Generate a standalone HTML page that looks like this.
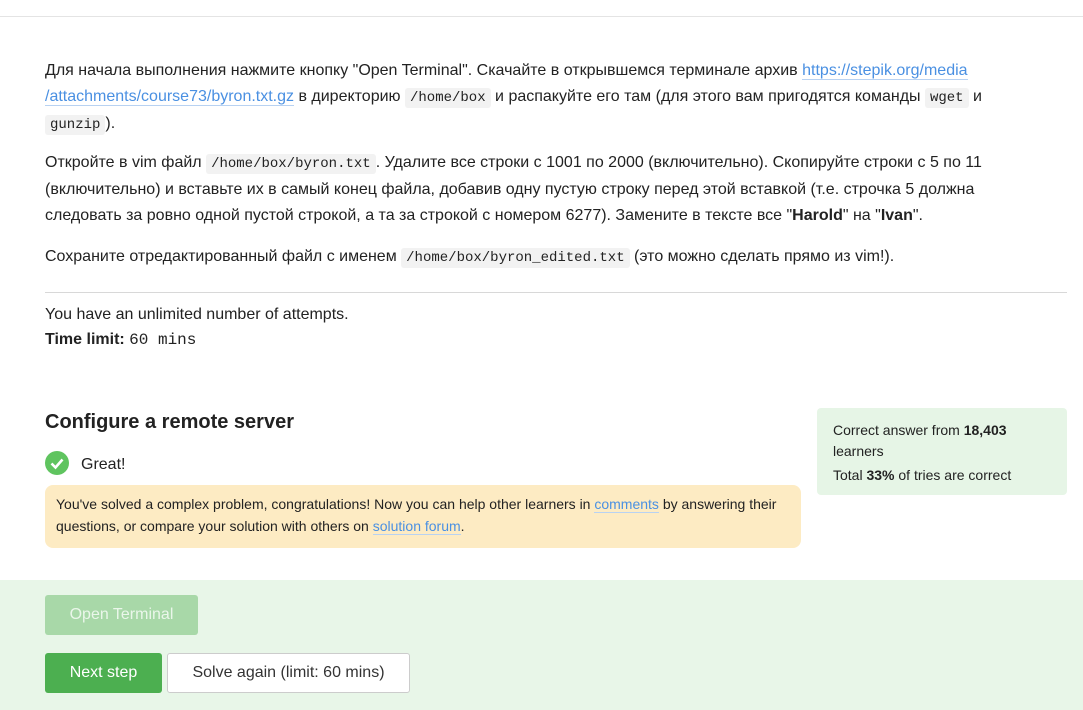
<!DOCTYPE html>
<html><head><meta charset="utf-8"><style>
body{margin:0;width:1083px;height:710px;overflow:hidden;background:#fff;font-family:"Liberation Sans",sans-serif;color:#222;font-size:16px}
.top{position:absolute;left:0;top:16px;width:1083px;height:1px;background:#e4e4e4}
.p{position:absolute;left:45px;white-space:nowrap;line-height:26px}
code{font-family:"Liberation Mono",monospace;font-size:14px;background:#f2f2f2;border-radius:3px;padding:2px 5px}
a{color:#4a90e2;text-decoration:none;border-bottom:1px solid #b8d2f2}
.hr{position:absolute;left:45px;top:292px;width:1022px;height:1px;background:#d8d8d8}
h2{position:absolute;left:45px;top:411px;margin:0;font-size:20px;font-weight:bold;color:#222}
.note{position:absolute;left:45px;top:485px;width:734px;height:50px;background:#fdebc3;border-radius:8px;padding:8px 11px 5px;font-size:14px;line-height:22px;white-space:nowrap}
.card{position:absolute;left:817px;top:408px;width:218px;height:67px;padding:12px 16px 8px;background:#e6f5e6;border-radius:4px;font-size:14px;line-height:21px}
.foot{position:absolute;left:0;top:580px;width:1083px;height:130px;background:#e8f6e8}
.btn{position:absolute;height:40px;line-height:40px;text-align:center;border-radius:3px;font-size:16px}
</style></head><body>
<div class="top"></div>
<div class="p" style="top:58px">Для начала выполнения нажмите кнопку "Open Terminal". Скачайте в открывшемся терминале архив <a>https://stepik.org/media</a><br><a>/attachments/course73/byron.txt.gz</a> в директорию <code>/home/box</code> и распакуйте его там (для этого вам пригодятся команды <code>wget</code> и<br><code>gunzip</code>).</div>
<div class="p" style="top:150px">Откройте в vim файл <code>/home/box/byron.txt</code>. Удалите все строки с 1001 по 2000 (включительно). Скопируйте строки с 5 по 11<br>(включительно) и вставьте их в самый конец файла, добавив одну пустую строку перед этой вставкой (т.е. строчка 5 должна<br>следовать за ровно одной пустой строкой, а та за строкой с номером 6277). Замените в тексте все "<b>Harold</b>" на "<b>Ivan</b>".</div>
<div class="p" style="top:244px">Сохраните отредактированный файл с именем <code>/home/box/byron_edited.txt</code> (это можно сделать прямо из vim!).</div>
<div class="hr"></div>
<div class="p" style="top:302px;line-height:25px">You have an unlimited number of attempts.<br><b>Time limit:</b> <span style="font-family:'Liberation Mono',monospace">60 mins</span></div>
<h2>Configure a remote server</h2>
<svg style="position:absolute;left:45px;top:451px" width="24" height="24" viewBox="0 0 24 24"><circle cx="12" cy="12" r="12" fill="#5fc45f"/><path d="M6.5 12.5l4 4 7-8" stroke="#fff" stroke-width="2.6" fill="none"/></svg>
<div class="p" style="top:452px;left:81px">Great!</div>
<div class="note">You've solved a complex problem, congratulations! Now you can help other learners in <a>comments</a> by answering their<br>questions, or compare your solution with others on <a>solution forum</a>.</div>
<div class="card">Correct answer from <b>18,403</b><br>learners<div style="margin-top:3px">Total <b>33%</b> of tries are correct</div></div>
<div class="foot"></div>
<div class="btn" style="left:45px;top:595px;width:153px;background:#a8d8a8;color:#eaf6ea">Open Terminal</div>
<div class="btn" style="left:45px;top:653px;width:117px;background:#4caf50;color:#fff">Next step</div>
<div class="btn" style="left:167px;top:653px;width:241px;height:38px;line-height:38px;background:#fff;border:1px solid #ccc;color:#333">Solve again (limit: 60 mins)</div>
</body></html>
